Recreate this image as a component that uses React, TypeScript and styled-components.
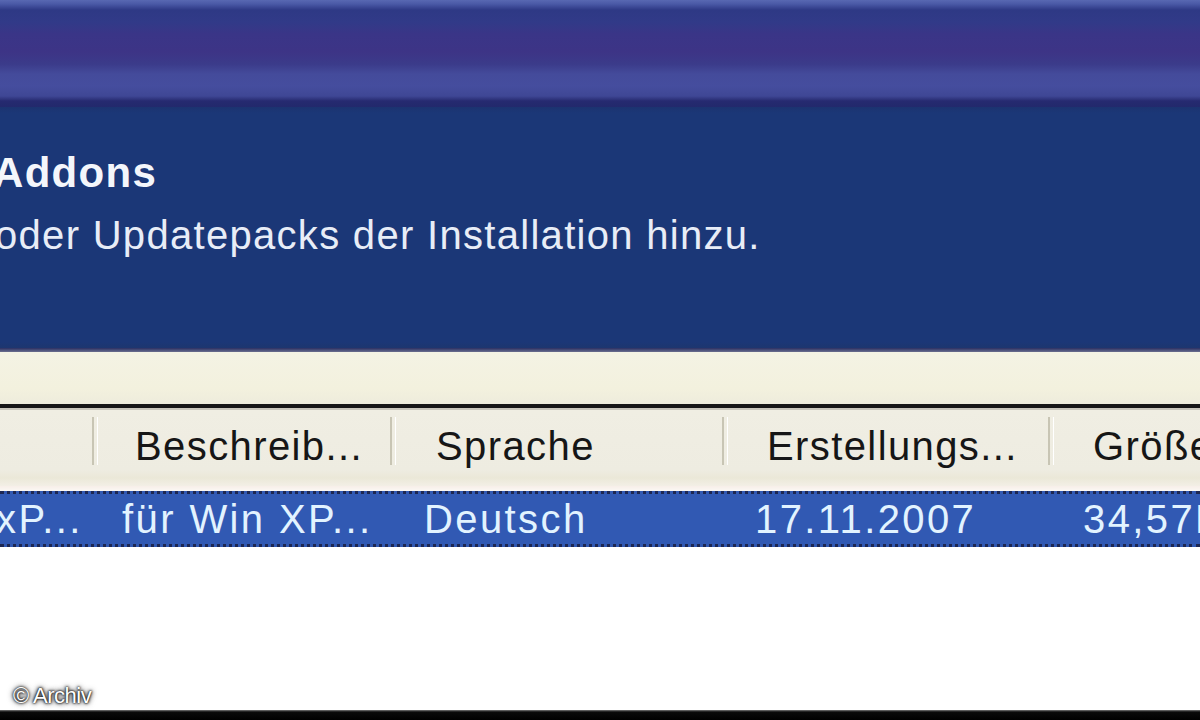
import React from "react";
import styled, { createGlobalStyle } from "styled-components";

const GlobalStyle = createGlobalStyle`
  html, body {
    margin: 0;
    padding: 0;
    background: #ffffff;
    overflow: hidden;
  }
  * { box-sizing: border-box; }
`;

const Window = styled.div`
  position: relative;
  width: 1200px;
  height: 720px;
  display: flex;
  flex-direction: column;
  overflow: hidden;
  font-family: "Liberation Sans", Arial, sans-serif;
  background: #ffffff;
`;

const TitleBar = styled.div`
  height: 107px;
  flex: none;
  background: linear-gradient(
    to bottom,
    #5868b2 0px,
    #4a59a6 4px,
    #2e3985 10px,
    #313a88 22px,
    #3a3587 34px,
    #3d3486 52px,
    #3b3b8a 64px,
    #444b9b 74px,
    #454d9e 86px,
    #3f4795 96px,
    #262a70 101px,
    #22296c 107px
  );
`;

const Banner = styled.div`
  height: 241px;
  flex: none;
  background: linear-gradient(to bottom, #1c3370 0px, #1b3777 6px, #1b3777 235px, #1d366f 241px);
  padding: 42px 0 0 0;
  display: flex;
  flex-direction: column;
  gap: 14px;
`;

const BannerTitle = styled.div`
  margin-left: -7px;
  color: #f4f6fb;
  font-weight: bold;
  font-size: 42px;
  line-height: 48px;
  letter-spacing: 1.3px;
`;

const BannerText = styled.div`
  margin-left: -5px;
  color: #e8edf7;
  font-size: 40px;
  line-height: 48px;
  letter-spacing: 1.3px;
`;

const BannerEdge = styled.div`
  height: 4px;
  flex: none;
  background: linear-gradient(to bottom, #2a2f63, #6b6f8e);
`;

const InfoStrip = styled.div`
  height: 52px;
  flex: none;
  background: linear-gradient(to bottom, #f4f3e4, #f3f1de 70%, #eeecdc);
`;

const ListFrame = styled.div`
  flex: 1;
  display: flex;
  flex-direction: column;
  border-top: 4px solid #161616;
  background: #ffffff;
`;

const Row = styled.div`
  display: grid;
  grid-template-columns: 92px 298px 332px 326px 152px;
  align-items: center;
  flex: none;
`;

const HeaderRow = styled(Row)`
  height: 78px;
  background: linear-gradient(to bottom, #f0eee3 0px, #eeece1 60px, #ebe8d8 68px, #f3efe6 76px, #f6f2ee 78px);
  border-top: 2px solid #c9c6bb;
`;

const HeaderCell = styled.div<{ $pad: number; $sep?: boolean }>`
  position: relative;
  height: 100%;
  display: flex;
  align-items: center;
  padding-left: ${(p) => p.$pad}px;
  padding-bottom: 4px;
  color: #161616;
  font-size: 40px;
  letter-spacing: 1.4px;
  white-space: nowrap;
  overflow: hidden;
  &::before {
    content: "";
    display: ${(p) => (p.$sep ? "block" : "none")};
    position: absolute;
    left: 0;
    top: 7px;
    height: 48px;
    width: 3px;
    border-left: 2px solid #c8c5b4;
    border-right: 1px solid #ffffff;
  }
`;

const Gap = styled.div`
  height: 5px;
  flex: none;
  background: linear-gradient(to bottom, #f7eee8, #fbf8f4);
`;

const SelectedRow = styled(Row)`
  height: 56px;
  background: #3159b3;
  border-top: 3px dotted #1d2752;
  border-bottom: 3px dotted #1d2752;
`;

const Cell = styled.div<{ $pad: number; $shift?: number }>`
  padding-left: ${(p) => p.$pad}px;
  margin-left: ${(p) => p.$shift ?? 0}px;
  color: #e2f3ff;
  font-size: 40px;
  letter-spacing: 2.4px;
  white-space: nowrap;
  overflow: hidden;
  line-height: 50px;
`;

const Empty = styled.div`
  flex: 1;
  background: #ffffff;
`;

const BottomBar = styled.div`
  height: 10px;
  flex: none;
  background: linear-gradient(to bottom, #7a7a7a 0px, #0a0a0a 2px, #000000 10px);
`;

const Watermark = styled.div`
  position: absolute;
  left: 13px;
  bottom: 11px;
  color: #ffffff;
  font-family: "Liberation Sans", Arial, sans-serif;
  font-size: 22px;
  letter-spacing: -0.5px;
  text-shadow: 0 0 2px #000, 0 0 3px #222, 0 0 5px #555, 0 0 6px #777;
`;

const headers = [
  { text: "", pad: 0 },
  { text: "Beschreib...", pad: 43 },
  { text: "Sprache", pad: 46 },
  { text: "Erstellungs...", pad: 45 },
  { text: "Größe", pad: 45 },
];

const cells = [
  { text: "xP...", pad: 0, shift: -4 },
  { text: "für Win XP...", pad: 30 },
  { text: "Deutsch", pad: 34 },
  { text: "17.11.2007", pad: 33 },
  { text: "34,57MB", pad: 35 },
];

export default function App() {
  return (
    <>
      <GlobalStyle />
      <Window>
        <TitleBar />
        <Banner>
          <BannerTitle>Addons</BannerTitle>
          <BannerText>oder Updatepacks der Installation hinzu.</BannerText>
        </Banner>
        <BannerEdge />
        <InfoStrip />
        <ListFrame>
          <HeaderRow>
            {headers.map((h, i) => (
              <HeaderCell key={i} $pad={h.pad} $sep={i > 0}>
                {h.text}
              </HeaderCell>
            ))}
          </HeaderRow>
          <Gap />
          <SelectedRow>
            {cells.map((c, i) => (
              <Cell key={i} $pad={c.pad} $shift={c.shift}>
                {c.text}
              </Cell>
            ))}
          </SelectedRow>
          <Empty />
        </ListFrame>
        <BottomBar />
        <Watermark>© Archiv</Watermark>
      </Window>
    </>
  );
}
